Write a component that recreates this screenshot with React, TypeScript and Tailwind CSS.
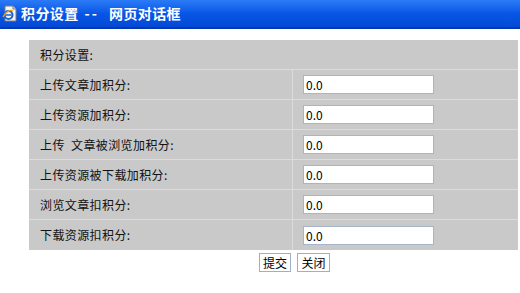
import React from 'react';

const rows = [
  '上传文章加积分:',
  '上传资源加积分:',
  '上传  文章被浏览加积分:',
  '上传资源被下载加积分:',
  '浏览文章扣积分:',
  '下载资源扣积分:',
];

const font = { fontFamily: '"Noto Sans CJK SC", "Liberation Sans", sans-serif' };

const PageIcon = () => (
  <svg width="16" height="17" viewBox="0 0 16 17">
    <path d="M3 1h8l3 3v12H3z" fill="#f4f4f0" stroke="#7a7a7a" strokeWidth="1" />
    <path d="M11 1v3h3" fill="#d8d8d8" stroke="#7a7a7a" strokeWidth="1" />
    <circle cx="6.5" cy="10" r="4" fill="none" stroke="#1a62d8" strokeWidth="2" />
    <path d="M3.5 10h6" stroke="#1a62d8" strokeWidth="1.5" />
    <path d="M1 12c2-5 8-8 10-6" fill="none" stroke="#e8a321" strokeWidth="1.2" />
  </svg>
);

const App = () => {
  return (
    <div className="w-[520px] h-[293px] bg-white overflow-hidden text-[12px] text-[#111]" style={font}>
      <div className="h-[29px] flex items-center pl-[2px] gap-[3px] bg-gradient-to-b from-[#2b7bf6] via-[#0856e6] to-[#0449d6] border-b-2 border-[#0039b3]">
        <PageIcon />
        <div className="flex items-center text-white font-bold text-[14px] tracking-[0.4px]">
          <span>积分设置</span>
          <span className="ml-[6px] tracking-[2px]">--</span>
          <span className="ml-[10px]">网页对话框</span>
        </div>
      </div>

      <div className="mt-[11px] ml-[29px] w-[489px] bg-[#c9c9c9]">
        <div className="h-[30px] flex items-center pl-[11px] border-b border-[#dcdcdc] tracking-[0.4px]">积分设置:</div>
        {rows.map((label, i) => (
          <div key={i} className="h-[30px] flex border-b border-[#dcdcdc] last:border-b-0">
            <div className="w-[264px] flex items-center pl-[11px] border-r border-[#dcdcdc] whitespace-pre tracking-[0.4px]">{label}</div>
            <div className="flex-1 flex items-center pl-[10px]">
              <input
                defaultValue="0.0"
                className="w-[131px] h-[19px] bg-white border border-[#a5b6c8] px-[2px] text-[12px] text-black outline-none"
                style={font}
              />
            </div>
          </div>
        ))}
      </div>

      <div className="flex gap-[6px] pl-[259px] mt-[3px]">
        <button className="h-[19px] w-[32px] bg-white border border-[#9fb0c2] text-[12px] text-black leading-none" style={font}>提交</button>
        <button className="h-[19px] w-[33px] bg-white border border-[#9fb0c2] text-[12px] text-black leading-none" style={font}>关闭</button>
      </div>
    </div>
  );
};

export default App;
